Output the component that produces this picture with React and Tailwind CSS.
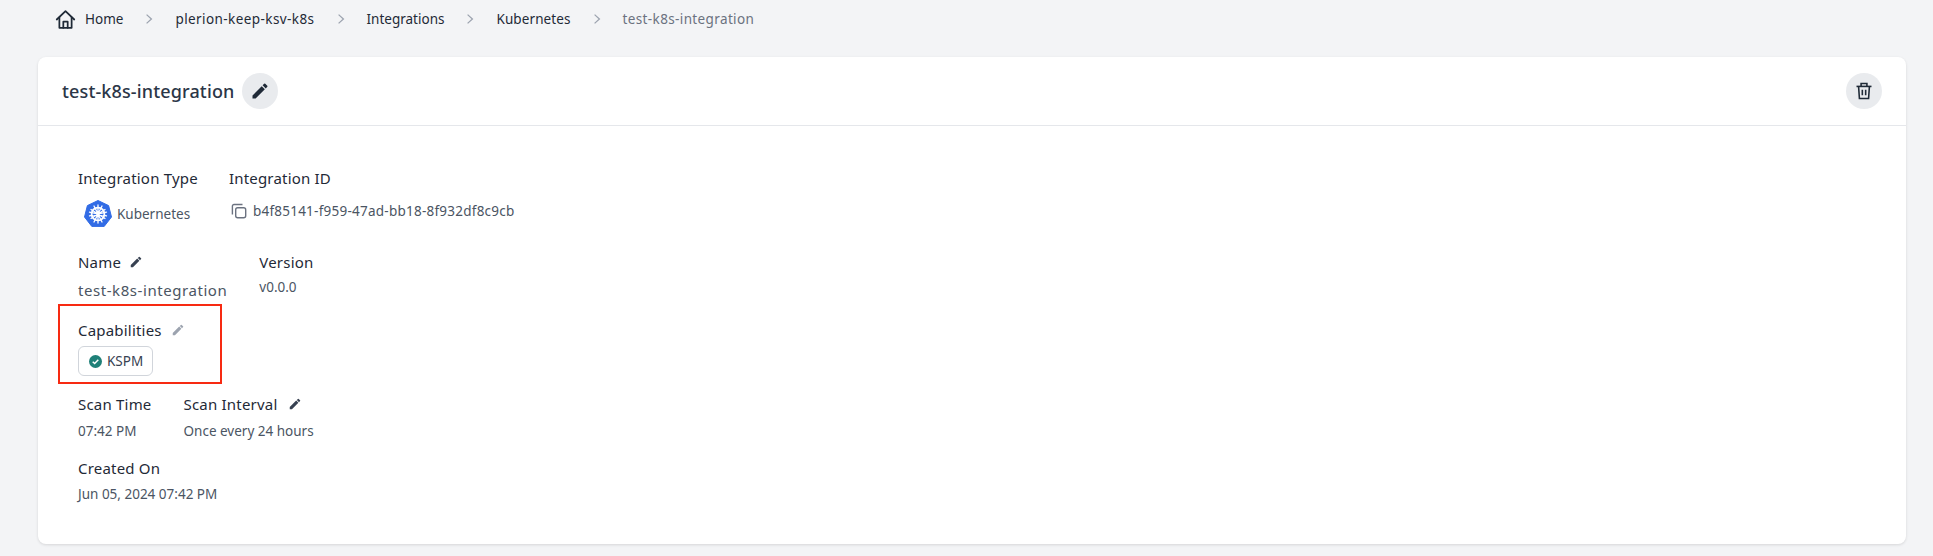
import React from "react";

const Pencil = ({ className }) => (
  <svg viewBox="0 0 24 24" className={className} fill="currentColor">
    <path d="M3 17.25V21h3.75L17.81 9.94l-3.75-3.75L3 17.25zM20.71 7.04a1 1 0 0 0 0-1.41l-2.34-2.34a1 1 0 0 0-1.41 0l-1.83 1.83 3.75 3.75 1.83-1.83z" />
  </svg>
);

const Chevron = () => (
  <svg viewBox="0 0 10 14" className="h-[12px] w-[8px] text-[#9ca3af]" fill="none" stroke="currentColor" strokeWidth="1.6">
    <path d="M2 1.5 8 7l-6 5.5" />
  </svg>
);

const Home = () => (
  <svg viewBox="0 0 24 24" className="h-[21px] w-[21px] text-[#1f2a37]" fill="none" stroke="currentColor" strokeWidth="2" strokeLinejoin="round" strokeLinecap="round">
    <path d="M2 12 12 2.5 22 12" />
    <path d="M5 9.5V21.5h14V9.5" />
    <path d="M9.5 21.5v-7h5v7" />
  </svg>
);

const Trash = () => (
  <svg viewBox="0 0 24 24" className="h-[20px] w-[20px] text-[#1f2a37]" fill="none" stroke="currentColor" strokeWidth="1.9">
    <path d="M3 6.5h18" />
    <path d="M8.5 6.5V3h7v3.5" />
    <path d="M5.5 6.5 6.5 21h11l1-14.5" />
    <path d="M10 10.5v6.5M14 10.5v6.5" />
  </svg>
);

const Copy = () => (
  <svg viewBox="0 0 16 16" className="h-[16px] w-[16px] text-[#6b7280]" fill="none" stroke="currentColor" strokeWidth="1.4">
    <rect x="4.7" y="4.7" width="10" height="10" rx="2" />
    <path d="M11.5 1.5H3a1.6 1.6 0 0 0-1.6 1.6v8.4" />
  </svg>
);

const K8s = () => (
  <svg viewBox="0 0 28 28" className="h-[28px] w-[28px]">
    <path d="M14 0.5 24.6 5.6 27.5 17 20.2 26.4H7.8L0.5 17 3.4 5.6Z" fill="#326CE5" stroke="#326CE5" strokeLinejoin="round" />
    <g stroke="#fff" fill="none">
      <circle cx="14" cy="14" r="6.4" strokeWidth="1.8" />
      <circle cx="14" cy="14" r="1.4" fill="#fff" strokeWidth="0.5" />
      <path strokeWidth="1.3" strokeLinecap="round" d="M14 5v18M7 9.5l14 9M21 9.5l-14 9M5.5 15.8l17-3.6M22.5 15.8l-17-3.6M10 22l8-16M18 22l-8-16" />
    </g>
  </svg>
);

const Label = ({ children }) => (
  <div className="text-[15px] leading-[20px] font-normal tracking-[0.2px] text-[#1f2a37]">{children}</div>
);

export default function App() {
  return (
    <div
      className="h-[556px] overflow-hidden bg-[#f3f4f6] px-[38px] pt-[9px]"
      style={{ fontFamily: '"Noto Sans", sans-serif' }}
    >
      <nav className="flex h-[20px] items-center pl-[17px] text-[13.5px] leading-[20px] text-[#1f2a37]">
        <Home />
        <span className="ml-[9px] mr-[22px]">Home</span>
        <Chevron />
        <span className="mx-[22px] tracking-[0.42px]">plerion-keep-ksv-k8s</span>
        <Chevron />
        <span className="mx-[22px]">Integrations</span>
        <Chevron />
        <span className="mx-[22px] tracking-[0.1px]">Kubernetes</span>
        <Chevron />
        <span className="mx-[22px] tracking-[0.37px] text-[#6b7280]">test-k8s-integration</span>
      </nav>

      <section className="mt-[28px] h-[487px] w-[1868px] rounded-[8px] bg-white shadow-[0_1px_3px_rgba(0,0,0,0.12)]">
        <header className="flex h-[69px] items-center justify-between border-b border-[#e5e7eb] pl-[24px] pr-[24px]">
          <div className="flex items-center gap-[8px]">
            <h1 className="text-[18px] leading-[28px] font-medium tracking-[0.14px] text-[#2b3647]">test-k8s-integration</h1>
            <button className="flex h-[36px] w-[36px] items-center justify-center rounded-full bg-[#e9ebee]">
              <Pencil className="h-[20px] w-[20px] text-[#1f2a37]" />
            </button>
          </div>
          <button className="flex h-[36px] w-[36px] items-center justify-center rounded-full bg-[#e9ebee]">
            <Trash />
          </button>
        </header>

        <div className="relative pl-[40px] pt-[42px] text-[#4b5563]">
          <div className="flex gap-[31px]">
            <div>
              <Label>Integration Type</Label>
              <div className="mt-[12px] flex items-center gap-[5px] pl-[6px] text-[13.5px] leading-[28px]">
                <K8s />
                Kubernetes
              </div>
            </div>
            <div>
              <Label>Integration ID</Label>
              <div className="mt-[9px] flex items-center gap-[6px] pl-[2px] text-[13.5px] leading-[28px] tracking-[0.24px]">
                <Copy />
                b4f85141-f959-47ad-bb18-8f932df8c9cb
              </div>
            </div>
          </div>

          <div className="mt-[24px] flex gap-[32px]">
            <div>
              <Label>
                <span className="flex items-center gap-[8px]">
                  Name <Pencil className="h-[14px] w-[14px] text-[#374151]" />
                </span>
              </Label>
              <div className="mt-[8px] text-[15px] leading-[20px] tracking-[0.56px]">test-k8s-integration</div>
            </div>
            <div>
              <Label>Version</Label>
              <div className="mt-[5px] text-[13.5px] leading-[20px]">v0.0.0</div>
            </div>
          </div>

          <div className="mt-[20px]">
            <Label>
              <span className="flex items-center gap-[9px]">
                Capabilities <Pencil className="h-[14px] w-[14px] text-[#9ca3af]" />
              </span>
            </Label>
            <div className="mt-[6px] inline-flex h-[30px] items-center gap-[5px] rounded-[6px] border border-[#d1d5db] pl-[10px] pr-[9px] text-[13.5px] text-[#374151]">
              <svg viewBox="0 0 14 14" className="h-[13px] w-[13px]">
                <circle cx="7" cy="7" r="7" fill="#1f8078" />
                <path d="M4 7.2 6.1 9.2 10 5.2" fill="none" stroke="#fff" strokeWidth="1.6" />
              </svg>
              KSPM
            </div>
          </div>

          <div className="mt-[18px] flex gap-[32px]">
            <div>
              <Label>Scan Time</Label>
              <div className="mt-[7px] text-[13.5px] leading-[20px]">07:42 PM</div>
            </div>
            <div>
              <Label>
                <span className="flex items-center gap-[11px]">
                  Scan Interval <Pencil className="h-[14px] w-[14px] text-[#374151]" />
                </span>
              </Label>
              <div className="mt-[7px] text-[13.5px] leading-[20px]">Once every 24 hours</div>
            </div>
          </div>

          <div className="mt-[17px]">
            <Label>Created On</Label>
            <div className="mt-[6px] text-[13.5px] leading-[20px]">Jun 05, 2024 07:42 PM</div>
          </div>

          <div className="absolute left-[20px] top-[178px] h-[80px] w-[164px] border-2 border-[#f72a12]" />
        </div>
      </section>
    </div>
  );
}
